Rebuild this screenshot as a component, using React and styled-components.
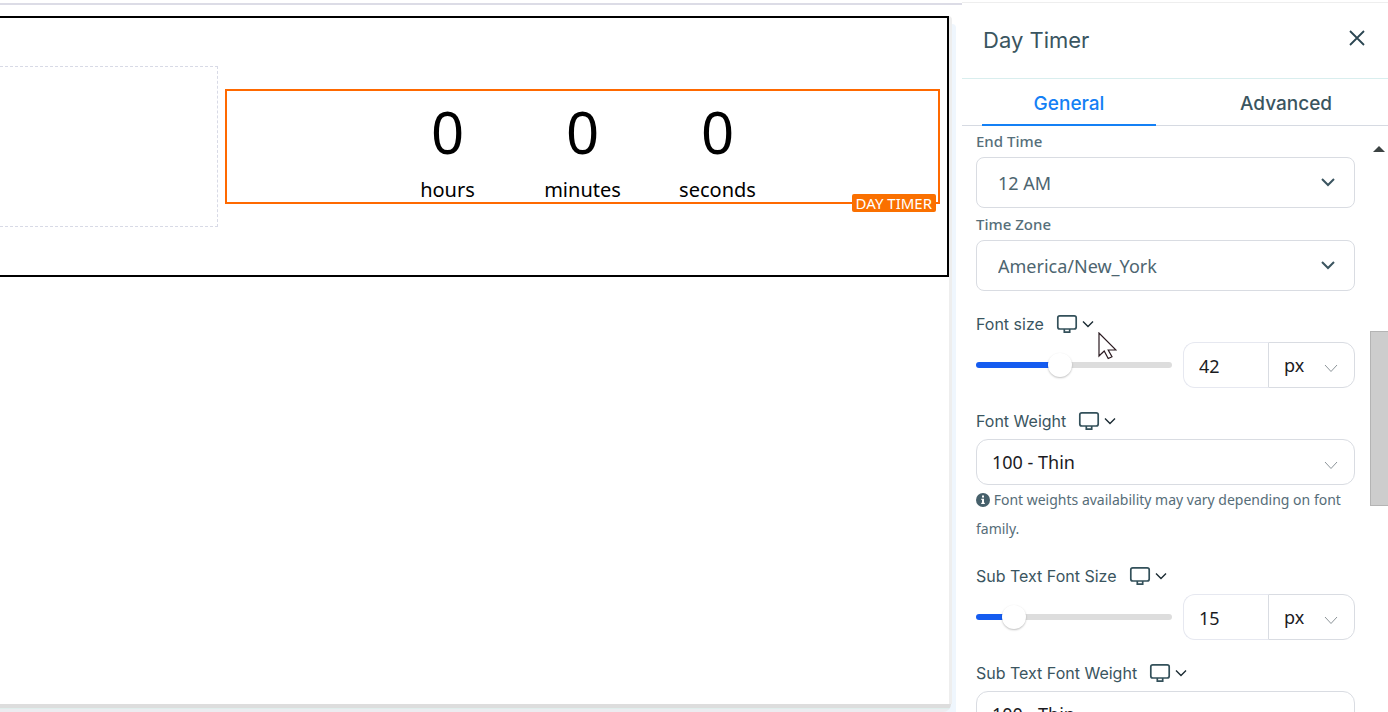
import React, { useState } from "react";

// style
import styled, { createGlobalStyle } from "styled-components";

const units = ["hours", "minutes", "seconds"];

const DeviceSwitch = ({ label }) => (
  <DeviceButton type="button" aria-label={label + " device"}>
    <svg width="22" height="20" viewBox="0 0 22 20" fill="none" stroke="#33505a" strokeWidth="1.7">
      <rect x="1.8" y="1.8" width="18.4" height="13.2" rx="2" />
      <path d="M8.300 15v3.200h5.400V15" />
    </svg>
    <svg width="12" height="8" viewBox="0 0 12 8" fill="none" stroke="#1b2b33" strokeWidth="1.4">
      <path d="M1 1.500l5 5 5-5" />
    </svg>
  </DeviceButton>
);

const SelectField = ({ id, label, options }) => (
  <Field>
    <SmallLabel htmlFor={id}>{label}</SmallLabel>
    <SelectWrap>
      <LargeSelect id={id}>
        {options.map((o) => (
          <option key={o}>{o}</option>
        ))}
      </LargeSelect>
      <Arrow $right={20} width="14" height="10" viewBox="0 0 14 10" stroke="#3b5560" strokeWidth="2">
        <path d="M1 2l6 6 6-6" />
      </Arrow>
    </SelectWrap>
  </Field>
);

const ThinArrow = () => (
  <Arrow $right={17} $drop width="14" height="9" viewBox="0 0 14 9" stroke="#8c9499" strokeWidth="1">
    <path d="M1 1l6 6.500 6-6.500" />
  </Arrow>
);

const SizeField = ({ id, label, initial }) => {
  const [value, setValue] = useState(initial);

  return (
    <Field $spaced>
      <LabelRow>
        <label htmlFor={id}>{label}</label>
        <DeviceSwitch label={label} />
      </LabelRow>
      <SizeRow>
        <Range
          type="range"
          aria-label={label + " slider"}
          max={100}
          value={value}
          $percent={value}
          onChange={(e) => setValue(e.target.value)}
        />
        <SizeGroup>
          <SizeInput id={id} type="text" value={value} onChange={(e) => setValue(e.target.value)} />
          <UnitWrap>
            <UnitSelect aria-label={label + " unit"}>
              <option>px</option>
              <option>em</option>
            </UnitSelect>
            <ThinArrow />
          </UnitWrap>
        </SizeGroup>
      </SizeRow>
    </Field>
  );
};

const WeightField = ({ id, label, hint }) => (
  <Field $spaced>
    <LabelRow>
      <label htmlFor={id}>{label}</label>
      <DeviceSwitch label={label} />
    </LabelRow>
    <SelectWrap>
      <WeightSelect id={id}>
        <option>100 - Thin</option>
        <option>400 - Normal</option>
      </WeightSelect>
      <ThinArrow />
    </SelectWrap>
    {hint && (
      <Hint>
        <svg width="14" height="14" viewBox="0 0 14 14">
          <circle cx="7" cy="7" r="7" fill="#46606b" />
          <path d="M6 2.600h2v2H6zM5.300 5.700H8v4h.8v1.300H5.200V9.700H6V7h-.7z" fill="#fff" />
        </svg>{" "}
        {hint}
      </Hint>
    )}
  </Field>
);

const App = () => {
  return (
    <Page>
      <GlobalStyle />
      <CanvasArea>
        <Canvas>
          <Section>
            <EmptyColumn />
            <Timer>
              {units.map((unit) => (
                <TimerUnit key={unit}>
                  <strong>0</strong>
                  <span>{unit}</span>
                </TimerUnit>
              ))}
              <Tag>DAY TIMER</Tag>
            </Timer>
          </Section>
        </Canvas>
        <CanvasFooter />
      </CanvasArea>

      <Panel>
        <PanelHeader>
          <h2>Day Timer</h2>
          <CloseButton type="button" aria-label="Close">
            <svg width="16" height="16" viewBox="0 0 16 16" stroke="#2b4652" strokeWidth="1.8">
              <path d="M1 1l14 14M15 1L1 15" />
            </svg>
          </CloseButton>
        </PanelHeader>
        <Tabs>
          <Tab type="button" $active>
            General
          </Tab>
          <Tab type="button">Advanced</Tab>
        </Tabs>
        <PanelBody>
          <Fields>
            <SelectField id="end-time" label="End Time" options={["12 AM", "1 AM", "2 AM"]} />
            <SelectField id="time-zone" label="Time Zone" options={["America/New_York", "Europe/London"]} />
            <SizeField id="font-size" label="Font size" initial={42} />
            <WeightField
              id="font-weight"
              label="Font Weight"
              hint="Font weights availability may vary depending on font family."
            />
            <SizeField id="sub-size" label="Sub Text Font Size" initial={15} />
            <WeightField id="sub-weight" label="Sub Text Font Weight" />
          </Fields>
          <ScrollTrack>
            <svg width="12" height="6" viewBox="0 0 12 6">
              <path d="M0 6l6-6 6 6z" fill="#3c4343" />
            </svg>
            <ScrollThumb />
          </ScrollTrack>
          <Cursor width="19" height="28" viewBox="0 0 19 28" fill="#fff" stroke="#2a1a20" strokeWidth="1.2">
            <path d="M1 1v23l5.200-5 4 7.500 3.800-1.800-3.800-6.700H18z" />
          </Cursor>
        </PanelBody>
      </Panel>
    </Page>
  );
};

export default App;

const GlobalStyle = createGlobalStyle`
  * {
    box-sizing: border-box;
  }

  body {
    margin: 0;
    background: #fff;
    font-family: "Noto Sans", "Open Sans", sans-serif;
  }

  button, input, select {
    font-family: inherit;
    margin: 0;
  }
`;

const Page = styled.div`
  display: grid;
  grid-template-columns: minmax(0, 1fr) 426px;
  height: 100vh;
  overflow: hidden;
`;

const CanvasArea = styled.main`
  display: flex;
  flex-direction: column;
  margin-top: 3px;
  padding: 11px 6px 0 0;
  border-top: 2px solid #dcdce6;
`;

const Canvas = styled.div`
  flex: 1;
  margin-right: 4px;
  border-right: 3px solid #eee;
  border-top-right-radius: 4px;
  box-shadow: 4px 8px 0 #eff6fd;
`;

const CanvasFooter = styled.div`
  position: relative;
  height: 8px;
  margin-right: 5px;
  border-top: 4px solid #ddd;
  border-bottom-right-radius: 8px;
  background: linear-gradient(#dfeeec 1px, #ececf0 1px);
`;

const Section = styled.section`
  display: grid;
  grid-template-columns: minmax(0, 218fr) minmax(0, 715fr);
  align-items: center;
  gap: 7px;
  padding: 48px 7px 48px 0;
  border: 2px solid #000;
  border-left: 0;
`;

const EmptyColumn = styled.div`
  height: 161px;
  border: 1px dashed #d8dae6;
  border-left: 0;
`;

const Timer = styled.div`
  position: relative;
  display: flex;
  justify-content: center;
  height: 115px;
  border: 2px solid #ff6900;
`;

const TimerUnit = styled.div`
  display: flex;
  flex-direction: column;
  align-items: center;
  width: 135px;
  color: #000;

  strong {
    font-size: 58px;
    font-weight: 400;
    line-height: 82px;
  }

  span {
    font-size: 20px;
    line-height: 34px;
  }
`;

const Tag = styled.span`
  position: absolute;
  right: 2px;
  bottom: -10px;
  padding: 0 4px;
  border-radius: 2px;
  background: #fa7000;
  color: #fff;
  font-size: 15px;
  line-height: 18px;
`;

const Panel = styled.aside`
  display: flex;
  flex-direction: column;
  min-height: 0;
  margin-top: 2px;
  border-top: 1px solid #eee;
  background: #fff;
  color: #3a5560;
`;

const PanelHeader = styled.header`
  display: flex;
  justify-content: space-between;
  align-items: center;
  height: 76px;
  flex-shrink: 0;
  padding: 0 23px 2px 21px;
  border-bottom: 1px solid #d9eeee;

  h2 {
    margin: 0;
    font-family: Inter, sans-serif;
    font-size: 22px;
    font-weight: 400;
  }
`;

const CloseButton = styled.button`
  display: flex;
  padding: 0;
  margin-bottom: 4px;
  border: 0;
  background: none;
  cursor: pointer;
`;

const Tabs = styled.nav`
  display: grid;
  grid-template-columns: 1fr 1fr;
  gap: 43px;
  flex-shrink: 0;
  height: 47px;
  padding: 0 15px 0 20px;
  border-bottom: 1px solid #d6dae2;
`;

const Tab = styled.button`
  height: 47px;
  padding: 4px 0 0;
  border: 0;
  border-bottom: 2px solid ${(props) => (props.$active ? "#1480f5" : "transparent")};
  background: none;
  color: ${(props) => (props.$active ? "#1480f5" : "#3a5560")};
  font-family: Inter, sans-serif;
  font-size: 19px;
  font-weight: 500;
  cursor: pointer;
`;

const PanelBody = styled.div`
  position: relative;
  display: flex;
  flex: 1;
  min-height: 0;
  overflow: hidden;
`;

const Fields = styled.form`
  flex: 1;
  min-width: 0;
  padding: 0 15px 0 14px;
`;

const Field = styled.div`
  margin-bottom: 1px;
  padding-top: ${(props) => (props.$spaced ? "13px" : 0)};
`;

const SmallLabel = styled.label`
  display: block;
  color: #566f7a;
  font-size: 15px;
  font-weight: 500;
  line-height: 31px;
`;

const LabelRow = styled.div`
  display: flex;
  align-items: center;
  gap: 12px;
  height: 37px;
  font-family: Inter, sans-serif;
  font-size: 16px;
`;

const DeviceButton = styled.button`
  display: flex;
  align-items: center;
  gap: 4px;
  padding: 0;
  border: 0;
  background: none;
  cursor: pointer;
`;

const SelectWrap = styled.div`
  position: relative;
`;

const Select = styled.select`
  display: block;
  width: 100%;
  appearance: none;
  border: 1px solid #d9dce2;
  background: #fff;
  font-size: 18px;
`;

const LargeSelect = styled(Select)`
  height: 51px;
  padding: 0 21px;
  border-radius: 8px;
  color: #4d6570;
`;

const WeightSelect = styled(Select)`
  height: 46px;
  padding: 0 15px;
  border-radius: 12px;
  color: #1b1b1f;
`;

const Arrow = styled.svg`
  position: absolute;
  right: ${(props) => props.$right}px;
  top: ${(props) => (props.$drop ? "22px" : "20px")};
  fill: none;
  pointer-events: none;
`;

const SizeRow = styled.div`
  display: flex;
  align-items: center;
  gap: 11px;
`;

const Range = styled.input`
  flex: 1;
  min-width: 0;
  height: 24px;
  appearance: none;
  background: none;

  &::-webkit-slider-runnable-track {
    height: 6px;
    border-radius: 3px;
    background: linear-gradient(to right, #155cf0 ${(props) => props.$percent}%, #ddd ${(props) => props.$percent}%);
  }

  &::-webkit-slider-thumb {
    appearance: none;
    width: 24px;
    height: 24px;
    margin-top: -9px;
    border-radius: 50%;
    background: #fff;
    box-shadow: 0 1px 2px rgba(0, 0, 0, 0.25);
  }
`;

const SizeGroup = styled.div`
  display: flex;
  width: 172px;
`;

const SizeInput = styled.input`
  width: 85px;
  height: 46px;
  padding: 2px 15px 0;
  border: 1px solid #e6e8f0;
  border-right: 0;
  border-radius: 12px 0 0 12px;
  color: #1b1b1f;
  font-size: 18px;
`;

const UnitWrap = styled(SelectWrap)`
  flex: 1;
`;

const UnitSelect = styled(Select)`
  height: 46px;
  padding: 0 15px;
  border-radius: 0 12px 12px 0;
  color: #1b1b1f;
`;

const Hint = styled.p`
  margin: 0;
  color: #566d78;
  font-size: 14px;
  line-height: 29px;

  svg {
    vertical-align: -2px;
  }
`;

const ScrollTrack = styled.div`
  display: flex;
  flex-direction: column;
  align-items: center;
  width: 18px;
  padding-top: 20px;
`;

const ScrollThumb = styled.div`
  width: 18px;
  height: 175px;
  margin-top: 179px;
  border: 1px solid #b4b4b4;
  border-right: 0;
  background: #cdcdcd;
`;

const Cursor = styled.svg`
  position: absolute;
  left: 136px;
  top: 206px;
  pointer-events: none;
`;
